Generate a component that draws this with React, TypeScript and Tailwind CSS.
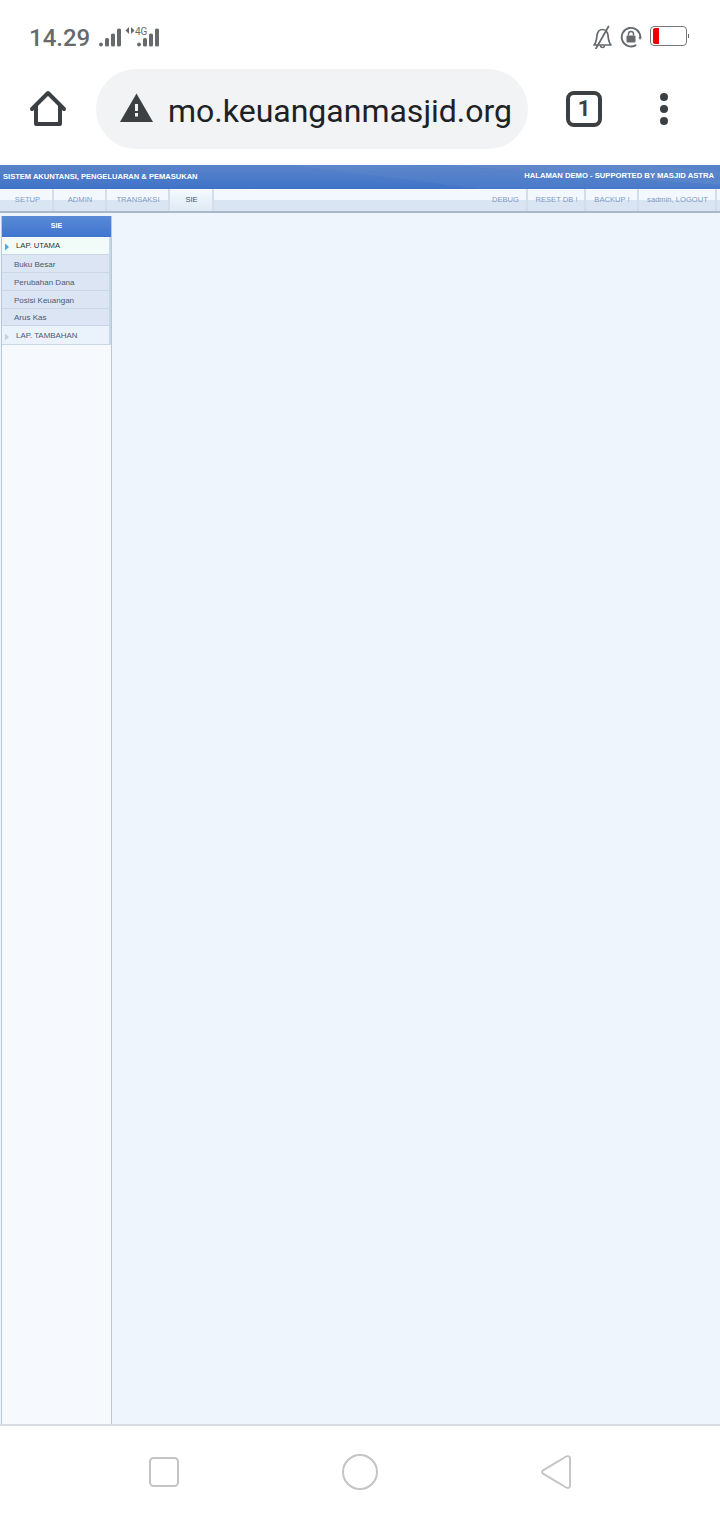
import type { ReactNode } from 'react';

const leftTabs = [
  { name: 'SETUP', width: 'w-[52px]' },
  { name: 'ADMIN', width: 'w-[53px]' },
  { name: 'TRANSAKSI', width: 'w-[63px]' },
  { name: 'SIE', width: 'w-[44px]', active: true },
];

const rightTabs = [
  { name: 'DEBUG', width: 'w-[44px]' },
  { name: 'RESET DB !', width: 'w-[58px]' },
  { name: 'BACKUP !', width: 'w-[53px]' },
  { name: 'sadmin, LOGOUT', width: 'w-[78px]' },
];

const subItems = [
  { name: 'Buku Besar', box: 'h-[18px] pt-[2px]' },
  { name: 'Perubahan Dana', box: 'h-[18px] pt-[2px]' },
  { name: 'Posisi Keuangan', box: 'h-[18px] pt-[2px]' },
  { name: 'Arus Kas', box: 'h-[17px] pt-[1px]' },
];

const Bars = ({ className }: { className: string }) => (
  <svg className={className} width="23" height="20" viewBox="0 0 23 20" fill="#666a6d">
    <circle cx="2" cy="16.5" r="1.9" />
    <rect x="6" y="10" width="4" height="8.5" rx="1.6" />
    <rect x="12" y="5.5" width="4" height="13" rx="1.6" />
    <rect x="18" y="0.5" width="4" height="18" rx="1.6" />
  </svg>
);

const StatusBar = () => (
  <div className="h-[69px] flex items-start pt-[24px] pl-[29px] pr-[31px] font-['Roboto',sans-serif] text-[#666a6d]">
    <span className="w-[61px] shrink-0 text-[24px] leading-[28px] font-medium whitespace-nowrap">14.29</span>
    <Bars className="ml-[9px] mt-[4px] shrink-0" />
    <div className="relative w-[37px] h-[28px] shrink-0">
      <svg className="absolute left-[3px] top-[3px]" width="10" height="8" viewBox="0 0 10 8" fill="#666a6d">
        <path d="M4 0 L4 7 L0.5 3.5 Z" />
        <path d="M6 0 L6 7 L9.5 3.5 Z" />
      </svg>
      <span className="absolute left-[13px] top-[2px] text-[10px] leading-[11px]">4G</span>
      <Bars className="absolute left-[15px] top-[4px]" />
    </div>
    <div className="ml-auto flex items-start">
      <svg className="mt-[1px]" width="22" height="24" viewBox="0 0 22 24" fill="none" stroke="#666a6d" strokeWidth="1.7" strokeLinecap="round" strokeLinejoin="round">
        <path d="M2 20 L19 20 C16.5 17.5 16.5 14 16 10.5 C15.5 6.5 13 4.5 10.5 4.5 C8 4.5 5.5 6.5 5 10.5 C4.5 14 4.5 17.5 2 20 Z" />
        <path d="M8.5 21 C9 23 12 23 12.5 21" />
        <path d="M16.5 1.5 L4 23.5" />
      </svg>
      <svg className="ml-[6px] mt-[2px]" width="22" height="22" viewBox="0 0 22 22" fill="none">
        <path d="M15.5 19.3 A9.3 9.3 0 1 1 20.3 11" stroke="#666a6d" strokeWidth="1.9" strokeLinecap="round" />
        <path d="M18.5 11 L21.8 11 L20 14 Z" fill="#666a6d" />
        <rect x="6.5" y="9.5" width="9" height="7" rx="1" fill="#666a6d" />
        <path d="M8.5 9.5 V8 A2.5 2.5 0 0 1 13.5 8 V9.5" stroke="#666a6d" strokeWidth="1.4" />
      </svg>
      <div className="ml-[8px] mt-[2px] w-[37px] h-[20px] rounded-[4px] border border-[#777] p-[1px] flex">
        <div className="ml-[1px] w-[6px] h-full bg-[#f00000] rounded-l-[2px]" />
      </div>
      <div className="ml-[1px] mt-[10px] w-[1px] h-[4px] bg-[#666a6d]" />
    </div>
  </div>
);

const Toolbar = () => (
  <div className="h-[80px] flex items-center">
    <svg className="ml-[29px] shrink-0" width="38" height="38" viewBox="0 0 38 38" fill="none" stroke="#3c4043" strokeWidth="4" strokeLinejoin="round" strokeLinecap="round">
      <path d="M3 19 L19 3 L35 19" />
      <path d="M7 16 V34 H31 V16" />
    </svg>
    <div className="ml-[29px] w-[432px] h-[80px] rounded-[40px] bg-[#f1f3f4] flex items-center shrink-0">
      <svg className="ml-[24px] -mt-[3px] shrink-0" width="33" height="29" viewBox="0 0 33 29">
        <path d="M16.5 0.5 L33 29 H0 Z" fill="#3c4043" />
        <rect x="15" y="11" width="3" height="7" fill="#f1f3f4" />
        <rect x="15" y="20" width="3" height="3.5" fill="#f1f3f4" />
      </svg>
      <span className="ml-[15px] mt-[3px] text-[#202124] text-[32px] leading-[36px] font-['Roboto',sans-serif] whitespace-nowrap">
        mo.keuanganmasjid.org
      </span>
    </div>
    <div className="ml-[38px] w-[36px] h-[36px] rounded-[8px] border-[4px] border-[#3c4043] flex items-center justify-center text-[#3c4043] text-[22px] font-bold font-['Roboto',sans-serif] leading-none shrink-0">
      1
    </div>
    <div className="ml-[58px] flex flex-col gap-[4px] shrink-0">
      <div className="w-[8px] h-[8px] rounded-full bg-[#3c4043]" />
      <div className="w-[8px] h-[8px] rounded-full bg-[#3c4043]" />
      <div className="w-[8px] h-[8px] rounded-full bg-[#3c4043]" />
    </div>
  </div>
);

const Tab = ({ name, width, active }: { name: string; width: string; active?: boolean }) => (
  <div
    className={`${width} h-full shrink-0 flex items-center justify-center border-r-2 border-[#d4deea] text-[7.6px] pl-[1px] pb-[1px] ${
      active
        ? 'text-[#44546a] bg-gradient-to-b from-[#f4faff] to-[#dfeaf4]'
        : 'text-[#7f98c4] bg-gradient-to-b from-[#f2f8fe] from-50% to-[#dae5f3] to-50%'
    }`}
  >
    {name}
  </div>
);

const TopBanner = () => (
  <div className="relative h-[24px] overflow-hidden bg-gradient-to-b from-[#5a84c9] to-[#3f72c8] flex items-center justify-between px-[3px] font-['Liberation_Sans',sans-serif] font-bold text-white">
    {/* swoosh in the banner background */}
    <svg className="absolute inset-0" width="720" height="24" viewBox="0 0 720 24">
      <path d="M290 0 L480 24 L720 24 L720 14 L400 0 Z" fill="#6f96d4" opacity="0.2" />
      <path d="M440 0 L720 20 L720 6 L640 0 Z" fill="#7da0d8" opacity="0.2" />
    </svg>
    <span className="relative text-[7.55px]">SISTEM AKUNTANSI, PENGELUARAN &amp; PEMASUKAN</span>
    <span className="relative pr-[3px] -mt-[3px] text-[7.65px]">HALAMAN DEMO - SUPPORTED BY MASJID ASTRA</span>
  </div>
);

const NavTabs = () => (
  <div className="h-[24px] border-b-2 border-[#a9b7c9] pl-[2px] flex font-['Liberation_Sans',sans-serif] bg-gradient-to-b from-[#f2f8fe] from-50% to-[#dae5f3] to-50%">
    {leftTabs.map((t) => (
      <Tab key={t.name} {...t} />
    ))}
    <div className="flex-1" />
    {rightTabs.map((t) => (
      <Tab key={t.name} {...t} />
    ))}
    <div className="w-[3px]" />
  </div>
);

const Arrow = ({ color }: { color: string }) => (
  <svg className="ml-[2px] mt-[2px] shrink-0" width="6" height="8" viewBox="0 0 6 8">
    <path d="M1 0.5 L5 4 L1 7.5 Z" fill={color} />
  </svg>
);

const MenuHead = ({ box, children }: { box: string; children: ReactNode }) => (
  <div className={`flex items-center border-b border-r-2 border-[#c9d6e6] ${box}`}>
    {children}
  </div>
);

const Sidebar = () => (
  <div className="ml-[1px] w-[111px] shrink-0 border-x border-[#b6c8dc] bg-[#f6fafe] font-['Liberation_Sans',sans-serif]">
    <div className="h-[21px] bg-gradient-to-b from-[#5a8ad6] to-[#3f75d0] flex items-center justify-center text-white text-[7px] font-bold">
      SIE
    </div>
    <MenuHead box="h-[18px] bg-[#f1fbf8]">
      <Arrow color="#4fa8e0" />
      <span className="ml-[6px] text-[7.7px] text-[#333]">LAP. UTAMA</span>
    </MenuHead>
    {subItems.map((item) => (
      <div
        key={item.name}
        className={`${item.box} pl-[12px] flex items-center bg-[#dbe5f3] border-b border-r-2 border-[#c9d6e6] text-[8px] text-[#4a5a70]`}
      >
        {item.name}
      </div>
    ))}
    <MenuHead box="h-[19px] pt-[2px] bg-[#eaf2fb]">
      <Arrow color="#c8d0d8" />
      <span className="ml-[6px] text-[7.9px] text-[#4a5a70]">LAP. TAMBAHAN</span>
    </MenuHead>
  </div>
);

const BottomNav = () => (
  <div className="h-[96px] shrink-0 border-t-2 border-[#d8dce2] bg-white flex items-start pt-[28px] pl-[149px]">
    <svg className="mt-[3px] shrink-0" width="30" height="30" viewBox="0 0 30 30" fill="none" stroke="#c4c4c4" strokeWidth="2">
      <rect x="1" y="1" width="28" height="28" rx="3.5" />
    </svg>
    <svg className="ml-[163px] shrink-0" width="36" height="36" viewBox="0 0 36 36" fill="none" stroke="#c4c4c4" strokeWidth="2">
      <circle cx="18" cy="18" r="17" />
    </svg>
    <svg className="ml-[163px] shrink-0" width="31" height="36" viewBox="0 0 32 36" fill="none" stroke="#c4c4c4" strokeWidth="2" strokeLinejoin="round">
      <path d="M2.5 16 L26 2 C28 1 30 2 30 4 V32 C30 34 28 35 26 34 L2.5 20 C0.5 19 0.5 17 2.5 16 Z" />
    </svg>
  </div>
);

export default function App() {
  return (
    <div className="w-[720px] h-[1520px] bg-white flex flex-col overflow-hidden">
      <StatusBar />
      <Toolbar />
      <div className="h-[16px]" />
      <TopBanner />
      <NavTabs />
      <div className="flex-1 bg-[#eff5fd] flex pt-[3px] min-h-0">
        <Sidebar />
      </div>
      <BottomNav />
    </div>
  );
}
